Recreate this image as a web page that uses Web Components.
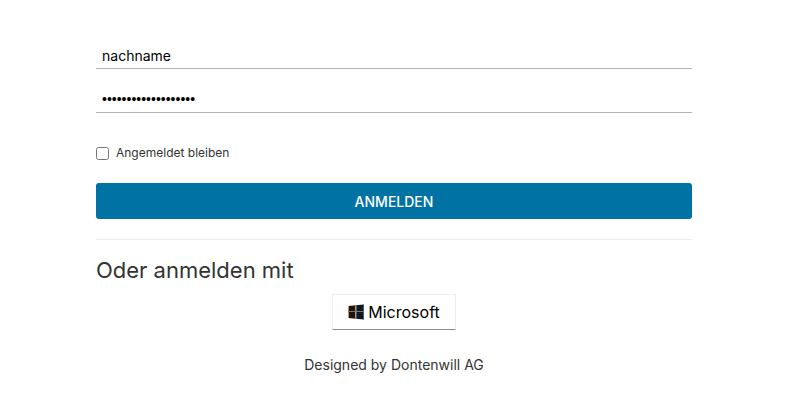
<!DOCTYPE html>
<html lang="de">
<head>
<meta charset="utf-8">
<meta name="viewport" content="width=device-width, initial-scale=1">
<title>Anmelden</title>
<style>
body { margin: 0; background: #fff; color: #333; font-family: Inter, "Noto Sans", sans-serif; font-size: 14px; line-height: 24px; }
</style>
</head>
<body>
<login-page></login-page>
<script>
class BaseElement extends HTMLElement {
  connectedCallback() {
    if (this.shadowRoot) return;
    this.attachShadow({ mode: "open" }).innerHTML = this.render();
  }
}

class TextField extends BaseElement {
  render() {
    const a = (n) => this.getAttribute(n) || "";
    return `<style>
      :host { display: block; }
      input { display: block; box-sizing: border-box; width: 100%; height: 25px; margin: 0; padding: 0 6px 2px; border: 0; border-bottom: 1px solid #b3b3b3; border-radius: 0; background: none; color: #000; font: 14px/22px Inter, "Noto Sans", sans-serif; outline: 0; }
      input[type=password] { font-family: "Liberation Sans", sans-serif; }
    </style><input type="${a("type")}" name="${a("name")}" aria-label="${a("label")}" value="${a("value")}">`;
  }
}

class CheckField extends BaseElement {
  render() {
    return `<style>
      :host { display: block; font-size: 12px; }
      label { display: inline-flex; align-items: center; gap: 7px; }
      input { width: 13px; height: 13px; margin: 0; }
    </style><label><input type="checkbox"><span><slot></slot></span></label>`;
  }
}

class PrimaryButton extends BaseElement {
  render() {
    return `<style>
      :host { display: block; }
      button { display: block; width: 100%; height: 36px; margin: 0; padding: 2px 12px 0; border: 0; border-radius: 3px; background: #0072a3; color: #fff; font: 500 14px/34px Inter, "Noto Sans", sans-serif; }
    </style><button type="submit"><slot></slot></button>`;
  }
}

class ProviderButton extends BaseElement {
  render() {
    return `<style>
      :host { display: block; }
      button { display: flex; align-items: center; gap: 4px; height: 36px; margin: 0; padding: 0 15px; border: 1px solid #eee; border-bottom-color: #8c8c8c; background: #fff; color: #000; font: 16px/24px Inter, "Noto Sans", sans-serif; }
      svg { display: block; width: 16px; height: 16px; }
    </style><button type="button"><svg viewBox="0 0 16 16" aria-hidden="true"><path fill="#161616" d="M0 2 16 .5v15L0 14z"/><path fill="#e08a45" d="M0 2h1v12H0zM7 1.3h1v13.4H7z"/><path fill="#3c82d2" d="M8 1.2h1v13.6H8zM15 .6l1-.1v15l-1-.1z" opacity=".7"/><path fill="#777" d="M0 7h16v1H0z"/></svg><span><slot></slot></span></button>`;
  }
}

class LoginPage extends BaseElement {
  render() {
    return `<style>
      :host { display: block; padding: 44px 97px 40px 96px; }
      form { display: flex; flex-direction: column; }
      .fields { display: flex; flex-direction: column; gap: 19px; }
      check-field { margin: 28px 0 15px; }
      hr { width: 100%; height: 1px; margin: 20px 0 14px; border: 0; background: #eee; }
      h2 { margin: 0 0 8px; font-size: 22px; font-weight: 400; line-height: 32px; }
      provider-button { align-self: center; }
      footer { margin-top: 23px; text-align: center; }
    </style>
    <form>
      <div class="fields">
        <text-field type="text" name="username" label="Benutzername" value="nachname"></text-field>
        <text-field type="password" name="password" label="Passwort" value="abcdefghijklmnopqrs"></text-field>
      </div>
      <check-field>Angemeldet bleiben</check-field>
      <primary-button>ANMELDEN</primary-button>
      <hr>
      <h2>Oder anmelden mit</h2>
      <provider-button>Microsoft</provider-button>
    </form>
    <footer>Designed by Dontenwill AG</footer>`;
  }
}

customElements.define("text-field", TextField);
customElements.define("check-field", CheckField);
customElements.define("primary-button", PrimaryButton);
customElements.define("provider-button", ProviderButton);
customElements.define("login-page", LoginPage);
</script>
</body>
</html>
